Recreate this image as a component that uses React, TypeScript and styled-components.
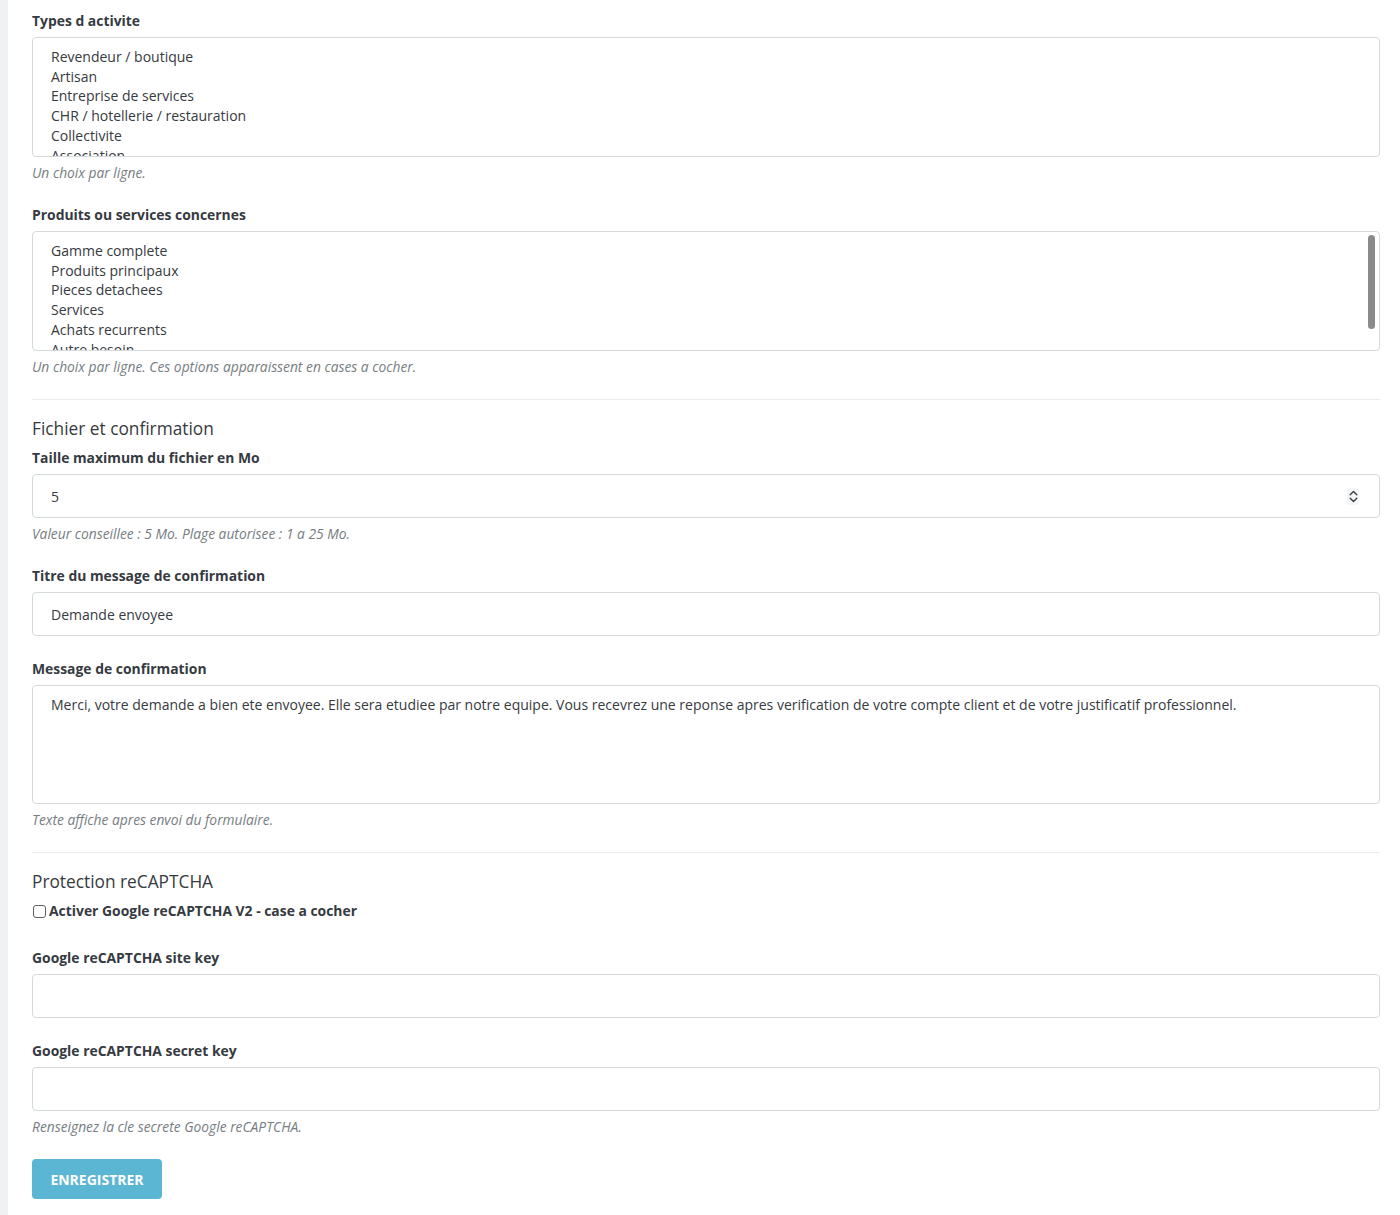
import React from "react";
import styled, { createGlobalStyle } from "styled-components";

const Global = createGlobalStyle`
  html, body { margin: 0; padding: 0; background: #eff1f2; }
  body { font-family: "Open Sans", "Noto Sans", sans-serif; color: #363a41; }
  * { box-sizing: border-box; }
`;

const Page = styled.div`
  display: flex;
  min-height: 1215px;
`;

const Card = styled.div`
  margin-left: 8px;
  flex: 1;
  background: #ffffff;
  padding: 11px 20px 16px 24px;
`;

const Group = styled.div<{ $gap?: number }>`
  margin-bottom: ${(p) => p.$gap ?? 22}px;
`;

const Label = styled.label`
  display: block;
  font-size: 13.9px;
  line-height: 20px;
  font-weight: 700;
  color: #363a41;
  margin-bottom: 6px;
`;

const AreaWrap = styled.div`
  position: relative;
`;

const Area = styled.textarea<{ $h: number }>`
  display: block;
  width: 100%;
  height: ${(p) => p.$h}px;
  border: 1px solid #d3d9dc;
  border-radius: 4px;
  padding: 9px 18px;
  font-family: "Open Sans", "Noto Sans", sans-serif;
  font-size: 14px;
  line-height: 19.7px;
  color: #363a41;
  resize: none;
  outline: none;
  overflow: hidden;
`;

const ScrollThumb = styled.div`
  position: absolute;
  top: 4px;
  right: 5px;
  width: 7px;
  height: 94px;
  border-radius: 4px;
  background: #8a8a8a;
`;

const Input = styled.input`
  display: block;
  width: 100%;
  height: 44px;
  border: 1px solid #d3d9dc;
  border-radius: 4px;
  padding: 0 18px;
  font-family: "Open Sans", "Noto Sans", sans-serif;
  font-size: 14px;
  color: #363a41;
  outline: none;
  background: #fff;
`;

const NumberBox = styled.div`
  display: flex;
  align-items: center;
  height: 44px;
  border: 1px solid #d3d9dc;
  border-radius: 4px;
  padding: 0 20px 0 18px;
  background: #fff;
`;

const BareInput = styled.input`
  flex: 1;
  border: none;
  outline: none;
  padding: 0;
  font-family: "Open Sans", "Noto Sans", sans-serif;
  font-size: 14px;
  color: #363a41;
  background: transparent;
`;

const Spin = styled.span`
  display: flex;
  align-items: center;
  justify-content: center;
  width: 12px;
  height: 17px;
  border-radius: 3px;
  background: #f4f5f6;
`;

const Help = styled.p`
  margin: 6px 0 0;
  font-size: 13.8px;
  line-height: 20px;
  font-style: italic;
  color: #767d82;
`;

const Divider = styled.hr`
  border: none;
  border-top: 1px solid #e9ecee;
  margin: 0 0 17px;
`;

const Heading = styled.h3`
  margin: 0 0 7px;
  font-size: 17.3px;
  line-height: 24px;
  font-weight: 400;
  color: #363a41;
`;

const CheckRow = styled.label`
  display: flex;
  align-items: center;
  gap: 3px;
  font-size: 13.9px;
  line-height: 20px;
  font-weight: 700;
  color: #363a41;
`;

const Check = styled.input`
  appearance: none;
  margin: 0 0 0 1px;
  width: 13px;
  height: 13px;
  border: 1px solid #5f5f5f;
  border-radius: 3px;
  background: #fff;
`;

const Button = styled.button`
  display: inline-flex;
  align-items: center;
  justify-content: center;
  width: 130px;
  height: 40px;
  border: none;
  border-radius: 4px;
  background: #5bb6d3;
  color: #ffffff;
  font-family: "Open Sans", "Noto Sans", sans-serif;
  font-size: 14px;
  font-weight: 700;
  text-transform: uppercase;
`;

const types = [
  "Revendeur / boutique",
  "Artisan",
  "Entreprise de services",
  "CHR / hotellerie / restauration",
  "Collectivite",
  "Association",
  "Autre",
].join("\n");

const products = [
  "Gamme complete",
  "Produits principaux",
  "Pieces detachees",
  "Services",
  "Achats recurrents",
  "Autre besoin",
].join("\n");

const SpinIcon = () => (
  <svg width="9" height="13" viewBox="0 0 9 13" fill="none">
    <path d="M1.2 4.8 L4.5 1.6 L7.8 4.8" stroke="#3a3d42" strokeWidth="1.4" strokeLinecap="round" strokeLinejoin="round" />
    <path d="M1.2 8.2 L4.5 11.4 L7.8 8.2" stroke="#3a3d42" strokeWidth="1.4" strokeLinecap="round" strokeLinejoin="round" />
  </svg>
);

export default function App() {
  return (
    <Page>
      <Global />
      <Card>
        <Group>
          <Label>Types d activite</Label>
          <Area $h={120} readOnly value={types} />
          <Help>Un choix par ligne.</Help>
        </Group>
        <Group>
          <Label>Produits ou services concernes</Label>
          <AreaWrap>
            <Area $h={120} readOnly value={products} />
            <ScrollThumb />
          </AreaWrap>
          <Help>Un choix par ligne. Ces options apparaissent en cases a cocher.</Help>
        </Group>
        <Divider />
        <Heading>Fichier et confirmation</Heading>
        <Group>
          <Label>Taille maximum du fichier en Mo</Label>
          <NumberBox>
            <BareInput readOnly value="5" />
            <Spin>
              <SpinIcon />
            </Spin>
          </NumberBox>
          <Help>Valeur conseillee : 5 Mo. Plage autorisee : 1 a 25 Mo.</Help>
        </Group>
        <Group $gap={23}>
          <Label>Titre du message de confirmation</Label>
          <Input readOnly value="Demande envoyee" />
        </Group>
        <Group>
          <Label>Message de confirmation</Label>
          <Area
            $h={119}
            readOnly
            value="Merci, votre demande a bien ete envoyee. Elle sera etudiee par notre equipe. Vous recevrez une reponse apres verification de votre compte client et de votre justificatif professionnel."
          />
          <Help>Texte affiche apres envoi du formulaire.</Help>
        </Group>
        <Divider />
        <Heading>Protection reCAPTCHA</Heading>
        <Group $gap={27}>
          <CheckRow>
            <Check type="checkbox" />
            Activer Google reCAPTCHA V2 - case a cocher
          </CheckRow>
        </Group>
        <Group $gap={23}>
          <Label>Google reCAPTCHA site key</Label>
          <Input readOnly value="" />
        </Group>
        <Group>
          <Label>Google reCAPTCHA secret key</Label>
          <Input readOnly value="" />
          <Help>Renseignez la cle secrete Google reCAPTCHA.</Help>
        </Group>
        <Button>Enregistrer</Button>
      </Card>
    </Page>
  );
}
